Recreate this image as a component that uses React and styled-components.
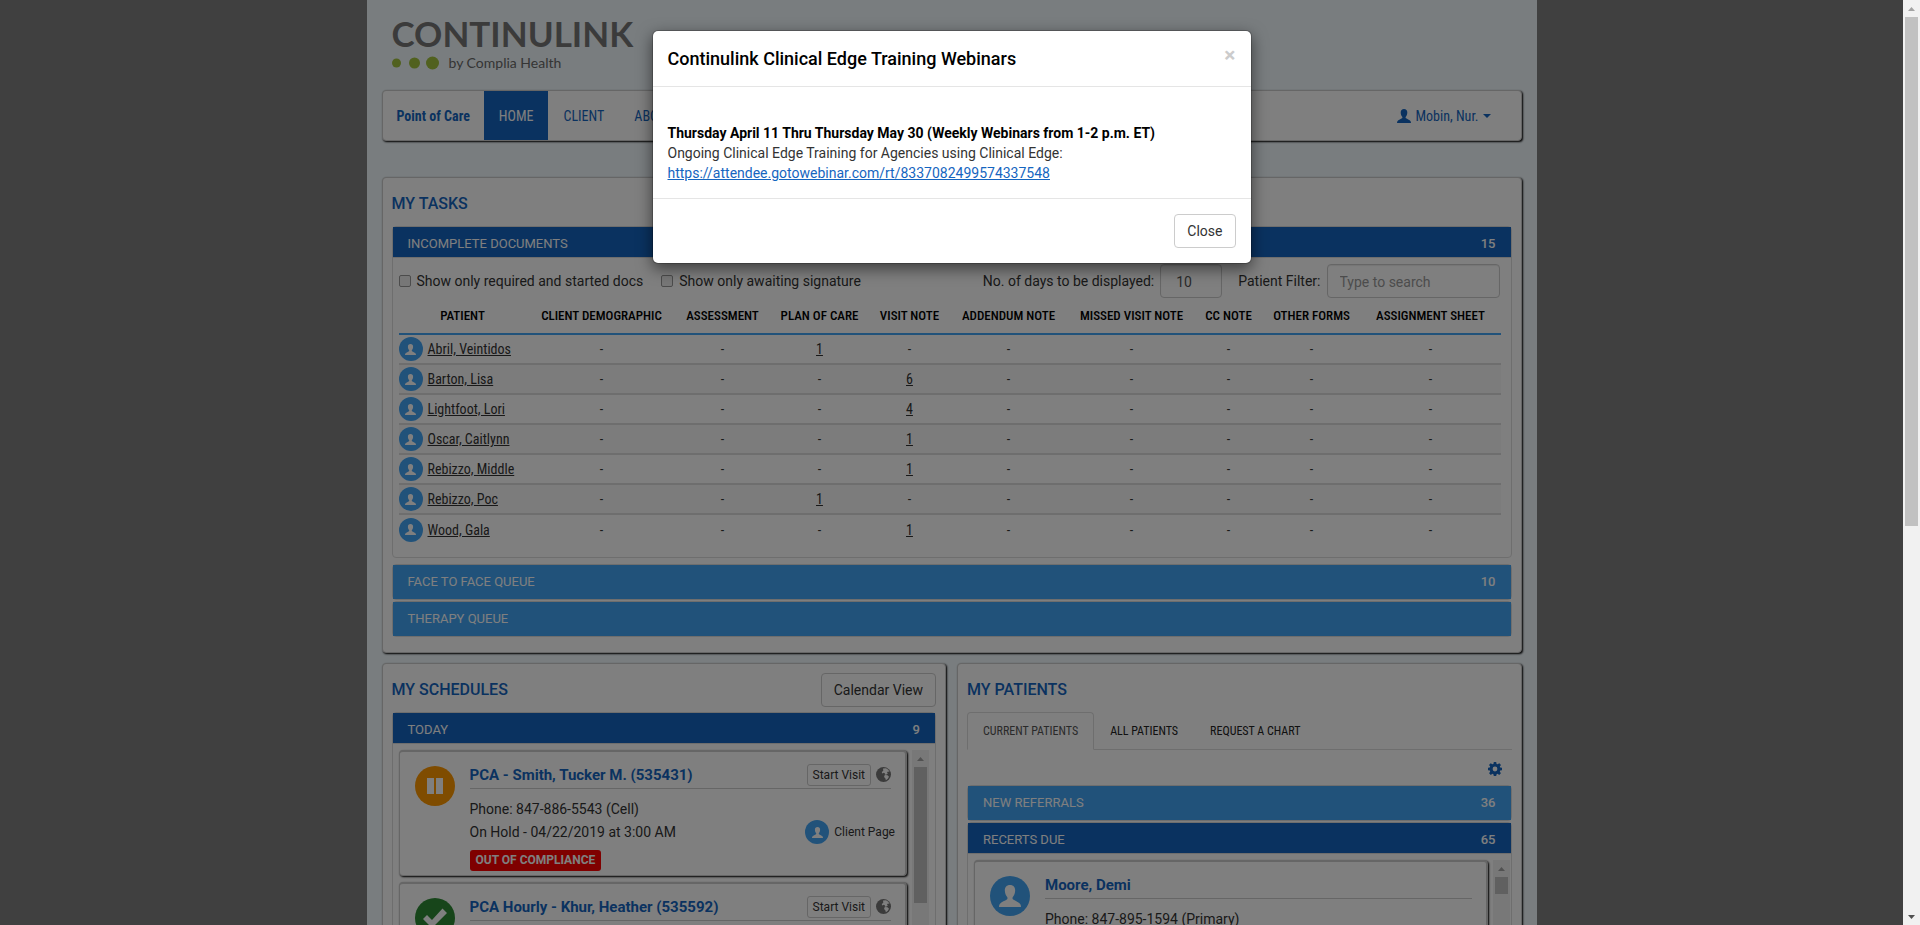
import React from "react";
import styled, { createGlobalStyle, css } from "styled-components";

const BODY = `Roboto, "Liberation Sans", sans-serif`;
const NARROW = `"Roboto Condensed", "Liberation Sans Narrow", Roboto, sans-serif`;
const BLUE = "#1565c0";
const SKY = "#42a5f5";

const Global = createGlobalStyle`
  *, *::before, *::after { box-sizing: border-box; }
  body { margin: 0; font: 14px/20px ${BODY}; color: #333; background: #808080; }
  button, input { font: inherit; color: inherit; }
  h1, h2, h3, p { margin: 0; }
`;

const Shell = styled.div`
  display: flex;
  height: 100vh;
  overflow: hidden;
`;
const Viewport = styled.div`
  position: relative;
  flex: 1;
  min-width: 0;
  overflow: hidden;
`;
const Page = styled.main`
  width: 100%;
  max-width: 1170px;
  min-height: 100%;
  margin: 0 auto;
  padding: 18px 15px 0;
  background: #f3fbff;
`;

const Brand = styled.div`
  height: 72px;
  padding-left: 10px;
`;
const BrandName = styled.div`
  font: 700 35px/30px Lato, sans-serif;
  color: #777;
`;
const BrandLine = styled.div`
  display: flex;
  align-items: center;
  gap: 10px;
  margin-top: 4px;
  font: 14px/22px Lato, sans-serif;
  color: #6a6a6a;
`;

const cardLook = css`
  background: #fff;
  border: 1px solid #ccc;
  border-radius: 4px;
  box-shadow: 1px 1px 2px #000;
`;
const NavBar = styled.nav`
  ${cardLook}
  display: flex;
  height: 51px;
  margin-bottom: 36px;
  font-family: ${NARROW};
`;
const NavLink = styled.a`
  display: flex;
  align-items: center;
  gap: 4px;
  padding: 0 ${(p) => (p.$strong ? 14 : 15)}px;
  text-decoration: none;
  font-weight: ${(p) => (p.$strong ? 700 : 400)};
  color: ${(p) => (p.$active ? "#fff" : BLUE)};
  background: ${(p) => (p.$active ? BLUE : "transparent")};
  margin-left: ${(p) => (p.$end ? "auto" : 0)};
  margin-right: ${(p) => (p.$end ? "15px" : 0)};
`;
const Caret = styled.span`
  border: 4px solid transparent;
  border-top-color: ${BLUE};
  border-bottom: 0;
`;

const Panel = styled.section`
  ${cardLook}
  min-width: 0;
  padding: 9px 9px 14px;
`;
const PanelHead = styled.div`
  display: flex;
  justify-content: space-between;
  align-items: center;
  height: 34px;
  margin-bottom: 5px;
`;
const PanelTitle = styled.h2`
  font: 500 16px/34px ${BODY};
  color: ${BLUE};
`;
const Section = styled.div`
  border: 1px solid #ddd;
  border-radius: 4px;
  margin-bottom: ${(p) => (p.$gap ? 6 : 1)}px;
`;
const Bar = styled.button`
  display: flex;
  justify-content: space-between;
  align-items: center;
  width: 100%;
  height: ${(p) => (p.$open ? 30 : 34)}px;
  padding: ${(p) => (p.$open ? 4 : 0)}px 15px 0;
  border: 0;
  font-size: 13px;
  color: #fff;
  background: ${(p) => (p.$open ? BLUE : SKY)};
`;
const Count = styled.strong`
  font-weight: 500;
`;

const Button = styled.button`
  height: ${(p) => (p.$small ? 22 : 34)}px;
  padding: ${(p) => (p.$small ? "0 5px" : "0 12px")};
  font-size: ${(p) => (p.$small ? 12 : 14)}px;
  background: #fff;
  border: 1px solid #ccc;
  border-radius: ${(p) => (p.$small ? 3 : 4)}px;
`;

const DocsBody = styled.div`
  padding: 6px 11px 13px 6px;
  border-top: 1px solid #ddd;
`;
const Filters = styled.div`
  display: flex;
  align-items: center;
  gap: 16px;
  height: 34px;
`;
const Check = styled.label`
  display: flex;
  align-items: center;
  gap: 6px;
  margin-right: 2px;
`;
const Tick = styled.input`
  appearance: none;
  width: 12px;
  height: 12px;
  margin: 0;
  border: 1px solid #999;
  border-radius: 2px;
  background: #eee;
`;
const Field = styled.label`
  display: flex;
  align-items: center;
  gap: 6px;
  margin-left: ${(p) => (p.$push ? "auto" : 0)};
`;
const TextBox = styled.input`
  width: ${(p) => p.$width}px;
  height: 34px;
  padding: 2px ${(p) => (p.$roomy ? 15 : 12)}px 0;
  color: #555;
  background: #fff;
  border: 1px solid #ccc;
  border-radius: 4px;
  box-shadow: inset 0 1px 1px rgba(0, 0, 0, 0.08);
  &::placeholder { color: #999; }
`;

const Table = styled.table`
  width: 100%;
  table-layout: fixed;
  border-collapse: collapse;
  font-family: ${NARROW};
`;
const Th = styled.th`
  height: 36px;
  padding: 0;
  font-size: 13px;
  line-height: 16px;
  font-weight: 500;
  white-space: nowrap;
  color: #000;
  border-bottom: 2px solid ${SKY};
`;
const Tr = styled.tr`
  height: 30px;
  & + & { border-top: 2px solid #ddd; }
  &:nth-child(even) { background: #f9f9f9; }
`;
const Td = styled.td`
  padding: 0;
  text-align: center;
`;
const Person = styled.div`
  display: flex;
  align-items: center;
  gap: 5px;
`;
const DocLink = styled.a`
  color: #333;
  text-decoration: underline;
`;

const Columns = styled.div`
  display: grid;
  grid-template-columns: 1fr 1fr;
  gap: 11px;
  margin-top: 10px;
`;
const ScrollArea = styled.div`
  display: flex;
  gap: 5px;
  padding: 6px ${(p) => (p.$flush ? 1 : 6)}px 0 6px;
  border-top: 1px solid #ddd;
`;
const List = styled.div`
  flex: 1;
  display: grid;
  align-content: start;
  gap: 6px;
`;
const Visit = styled.article`
  ${cardLook}
  border-width: 2px 2px 1px 1px;
  display: flex;
  gap: 15px;
  min-height: 126px;
  padding: 10px 14px 3px 15px;
`;
const VisitBody = styled.div`
  flex: 1;
`;
const VisitHead = styled.div`
  display: flex;
  align-items: center;
  gap: 5px;
  height: 27px;
  margin-bottom: 9px;
  border-bottom: 1px solid #ccc;
`;
const VisitTitle = styled.h3`
  flex: 1;
  font: 700 15px/24px ${BODY};
  color: ${BLUE};
`;
const VisitRow = styled.div`
  display: flex;
  justify-content: space-between;
`;
const Line = styled.p`
  line-height: 23px;
`;
const Badge = styled.span`
  display: inline-block;
  margin-top: 6px;
  padding: 0 6px;
  font: 700 12px/21px ${BODY};
  color: #fff;
  background: #f00;
  border-radius: 3px;
`;
const ClientLink = styled.a`
  display: flex;
  align-items: center;
  align-self: flex-end;
  gap: 5px;
  margin: 0 -4px 0 0;
  font-size: 12px;
  color: #333;
  text-decoration: none;
`;
const Disc = styled.span`
  display: inline-flex;
  flex: none;
  align-items: center;
  justify-content: center;
  width: ${(p) => p.$size}px;
  height: ${(p) => p.$size}px;
  margin-top: ${(p) => (p.$size > 30 ? 4 : 0)}px;
  border-radius: 50%;
  color: #fff;
  background: ${(p) => p.$color || SKY};
`;

const Tabs = styled.div`
  display: flex;
  height: 38px;
  border-bottom: 1px solid #ddd;
  margin-bottom: 9px;
`;
const Tab = styled.button`
  height: 38px;
  padding: 0 15px;
  border: 1px solid ${(p) => (p.$active ? "#ddd" : "transparent")};
  border-bottom-color: ${(p) => (p.$active ? "#fff" : "transparent")};
  border-radius: 4px 4px 0 0;
  font: 12px/20px ${NARROW};
  color: ${(p) => (p.$active ? "#555" : "#222")};
  background: transparent;
`;
const Tools = styled.div`
  display: flex;
  justify-content: flex-end;
  height: 26px;
  padding: 3px 10px 0;
`;
const IconButton = styled.button`
  display: flex;
  padding: 0;
  border: 0;
  color: ${(p) => p.$color || BLUE};
  background: none;
  height: 16px;
`;

const Track = styled.div`
  width: 17px;
  flex: none;
  display: flex;
  flex-direction: column;
  align-items: center;
  background: #f1f1f1;
`;
const Arrow = styled.span`
  height: 17px;
  display: flex;
  align-items: center;
  color: ${(p) => (p.$down ? "#505050" : "#a3a3a3")};
  margin-top: ${(p) => (p.$down ? "auto" : 0)};
`;
const Thumb = styled.div`
  width: 13px;
  height: ${(p) => p.$length};
  background: #c1c1c1;
`;

const Backdrop = styled.div`
  position: absolute;
  inset: 0;
  padding: 30px 0;
  background: rgba(0, 0, 0, 0.5);
`;
const Dialog = styled.div`
  width: 600px;
  max-width: 100%;
  margin: 0 auto;
  color: #333;
  background: #fff;
  background-clip: padding-box;
  border: 1px solid rgba(0, 0, 0, 0.2);
  border-radius: 6px;
  box-shadow: 0 5px 15px rgba(0, 0, 0, 0.5);
`;
const DialogHead = styled.header`
  display: flex;
  justify-content: space-between;
  padding: 15px 15px 14px;
  border-bottom: 1px solid #e5e5e5;
`;
const DialogTitle = styled.h1`
  font: 500 18px/26px ${BODY};
  color: #000;
`;
const DialogX = styled.button`
  align-self: flex-start;
  padding: 0;
  border: 0;
  background: none;
  font: 700 21px/18px ${BODY};
  color: #ccc;
`;
const DialogBody = styled.div`
  padding: 36px 15px 15px;
`;
const DialogLink = styled.a`
  color: ${BLUE};
  text-decoration: underline;
`;
const Strong = styled.p`
  font-weight: 700;
  color: #000;
`;
const DialogFoot = styled.footer`
  display: flex;
  justify-content: flex-end;
  padding: 15px;
  border-top: 1px solid #e5e5e5;
`;

const UserIcon = ({ size = 14 }) => (
  <svg width={size} height={size} viewBox="0 0 14 14" fill="currentColor" aria-hidden="true">
    <path d="M7 0C4.900 0 3.700 1.400 3.700 3.400c0 1.800.7 3.400 1.500 4.300.3.500.3 1.300-.2 1.600C3.800 10.100 1.800 10.800.8 11.700.2 12.200 0 13 0 14h14c0-1-.2-1.800-.8-2.300-1-.9-3-1.600-4.200-2.400-.5-.3-.5-1.100-.2-1.600.8-.9 1.500-2.500 1.500-4.300C10.300 1.400 9.100 0 7 0z" />
  </svg>
);
const GlobeIcon = () => (
  <svg width="15" height="15" viewBox="0 0 15 15" aria-hidden="true">
    <circle cx="7.5" cy="7.5" r="7.5" fill="currentColor" />
    <path fill="#fff" d="M7 1.500l3-.2 2.300 1.500 1.200 2.200-1.500-.5-1 .8.800 1.200-1.200 1-1.800.3.200-1.300-1.200-.7-1.600.6L5.800 5l1.500-1.300zM8.800 8l2.700.2 1.500 1.600-1.200 2-1.900 1.500-.6-2-1.300-1.300z" />
  </svg>
);
const GearIcon = () => (
  <svg width="14" height="14" viewBox="0 0 14 14" fill="currentColor" fillRule="evenodd" aria-hidden="true">
    <path d="M5.800 0h2.400l.4 1.900 1 .4 1.700-1.100L13 2.900l-1.200 1.600.4 1 1.800.3v2.400l-1.800.4-.4 1 1.100 1.600-1.700 1.700-1.600-1.100-1 .4L8.200 14H5.800l-.4-1.800-1-.4-1.600 1.100-1.700-1.700 1.100-1.600-.4-1L0 8.200V5.800l1.800-.3.400-1L1 2.900l1.700-1.700 1.700 1.100 1-.4zM7 4.600a2.400 2.400 0 100 4.800 2.400 2.400 0 000-4.800z" />
  </svg>
);
const PauseIcon = () => (
  <svg width="18" height="18" viewBox="0 0 18 18" fill="currentColor" aria-hidden="true">
    <path d="M1 1h7v16H1zM10 1h7v16h-7z" />
  </svg>
);
const CheckIcon = () => (
  <svg width="26" height="24" viewBox="0 0 26 24" fill="currentColor" aria-hidden="true">
    <path d="M1 13l4-4 5 5L20.500 2.500 25 7 10 22z" />
  </svg>
);
const Triangle = ({ down }) => (
  <svg width="7" height="4" viewBox="0 0 7 4" fill="currentColor" aria-hidden="true">
    <path d={down ? "M0 0h7L3.500 4z" : "M0 4h7L3.500 0z"} />
  </svg>
);
const Dots = () => (
  <svg width="47" height="14" viewBox="0 0 47 14" fill="#a2c23e" aria-hidden="true">
    <circle cx="4.500" cy="7" r="4.500" />
    <circle cx="22.500" cy="7" r="5.500" />
    <circle cx="40.500" cy="7" r="6.500" />
  </svg>
);

const COLUMNS = [
  ["PATIENT", 128],
  ["CLIENT DEMOGRAPHIC", 150],
  ["ASSESSMENT", 92],
  ["PLAN OF CARE", 102],
  ["VISIT NOTE", 78],
  ["ADDENDUM NOTE", 120],
  ["MISSED VISIT NOTE", 126],
  ["CC NOTE", 68],
  ["OTHER FORMS", 98],
  ["ASSIGNMENT SHEET", 140],
];
const PATIENTS = [
  { name: "Abril, Veintidos", plan: 1 },
  { name: "Barton, Lisa", visit: 6 },
  { name: "Lightfoot, Lori", visit: 4 },
  { name: "Oscar, Caitlynn", visit: 1 },
  { name: "Rebizzo, Middle", visit: 1 },
  { name: "Rebizzo, Poc", plan: 1 },
  { name: "Wood, Gala", visit: 1 },
];

const Scrollbar = ({ length, both }) => (
  <Track aria-hidden="true">
    <Arrow><Triangle /></Arrow>
    <Thumb $length={length} />
    {both && <Arrow $down><Triangle down /></Arrow>}
  </Track>
);

const DocsTable = () => (
  <Table>
    <colgroup>
      {COLUMNS.map(([name, width]) => <col key={name} width={width} />)}
    </colgroup>
    <thead>
      <tr>{COLUMNS.map(([name]) => <Th key={name} scope="col">{name}</Th>)}</tr>
    </thead>
    <tbody>
      {PATIENTS.map((p) => (
        <Tr key={p.name}>
          <Td>
            <Person>
              <Disc $size={24}><UserIcon size={11} /></Disc>
              <DocLink href="#patient">{p.name}</DocLink>
            </Person>
          </Td>
          {["demo", "assess", "plan", "visit", "addendum", "missed", "cc", "other", "sheet"].map((key) => (
            <Td key={key}>{p[key] ? <DocLink href="#docs">{p[key]}</DocLink> : "-"}</Td>
          ))}
        </Tr>
      ))}
    </tbody>
  </Table>
);

const VisitCard = ({ title, color, icon, children }) => (
  <Visit>
    <Disc $size={40} $color={color}>{icon}</Disc>
    <VisitBody>
      <VisitHead>
        <VisitTitle>{title}</VisitTitle>
        <Button $small type="button">Start Visit</Button>
        <IconButton $color="#777" type="button" aria-label="Map"><GlobeIcon /></IconButton>
      </VisitHead>
      {children}
    </VisitBody>
  </Visit>
);

export default function App() {
  return (
    <Shell>
      <Global />
      <Viewport>
        <Page>
          <Brand>
            <BrandName>CONTINULINK</BrandName>
            <BrandLine><Dots />by Complia Health</BrandLine>
          </Brand>
          <NavBar>
            <NavLink href="#poc" $strong>Point of Care</NavLink>
            <NavLink href="#home" $active>HOME</NavLink>
            <NavLink href="#client">CLIENT</NavLink>
            <NavLink href="#about">ABOUT</NavLink>
            <NavLink href="#account" $end><UserIcon />Mobin, Nur.<Caret /></NavLink>
          </NavBar>

          <Panel>
            <PanelHead><PanelTitle>MY TASKS</PanelTitle></PanelHead>
            <Section $gap>
              <Bar $open type="button">INCOMPLETE DOCUMENTS<Count>15</Count></Bar>
              <DocsBody>
                <Filters>
                  <Check><Tick type="checkbox" />Show only required and started docs</Check>
                  <Check><Tick type="checkbox" />Show only awaiting signature</Check>
                  <Field $push>No. of days to be displayed:<TextBox $width={62} $roomy defaultValue="10" /></Field>
                  <Field>Patient Filter:<TextBox $width={173} placeholder="Type to search" /></Field>
                </Filters>
                <DocsTable />
              </DocsBody>
            </Section>
            <Section><Bar type="button">FACE TO FACE QUEUE<Count>10</Count></Bar></Section>
            <Section><Bar type="button">THERAPY QUEUE</Bar></Section>
          </Panel>

          <Columns>
            <Panel>
              <PanelHead>
                <PanelTitle>MY SCHEDULES</PanelTitle>
                <Button type="button">Calendar View</Button>
              </PanelHead>
              <Section>
                <Bar $open type="button">TODAY<Count>9</Count></Bar>
                <ScrollArea>
                  <List>
                    <VisitCard title="PCA - Smith, Tucker M. (535431)" color="#ff9800" icon={<PauseIcon />}>
                      <VisitRow>
                        <div>
                          <Line>Phone: 847-886-5543 (Cell)</Line>
                          <Line>On Hold - 04/22/2019 at 3:00 AM</Line>
                        </div>
                        <ClientLink href="#client">
                          <Disc $size={24}><UserIcon size={11} /></Disc>
                          Client Page
                        </ClientLink>
                      </VisitRow>
                      <Badge>OUT OF COMPLIANCE</Badge>
                    </VisitCard>
                    <VisitCard title="PCA Hourly - Khur, Heather (535592)" color="#2e8b34" icon={<CheckIcon />} />
                  </List>
                  <Scrollbar length="136px" />
                </ScrollArea>
              </Section>
            </Panel>
            <Panel>
              <PanelHead><PanelTitle>MY PATIENTS</PanelTitle></PanelHead>
              <Tabs role="tablist">
                <Tab role="tab" $active>CURRENT PATIENTS</Tab>
                <Tab role="tab">ALL PATIENTS</Tab>
                <Tab role="tab">REQUEST A CHART</Tab>
              </Tabs>
              <Tools><IconButton type="button" aria-label="Settings"><GearIcon /></IconButton></Tools>
              <Section><Bar type="button">NEW REFERRALS<Count>36</Count></Bar></Section>
              <Section>
                <Bar $open type="button">RECERTS DUE<Count>65</Count></Bar>
                <ScrollArea $flush>
                  <List>
                    <Visit>
                      <Disc $size={40}><UserIcon size={22} /></Disc>
                      <VisitBody>
                        <VisitHead><VisitTitle>Moore, Demi</VisitTitle></VisitHead>
                        <Line>Phone: 847-895-1594 (Primary)</Line>
                      </VisitBody>
                    </Visit>
                  </List>
                  <Scrollbar length="17px" />
                </ScrollArea>
              </Section>
            </Panel>
          </Columns>
        </Page>
        <Backdrop>
          <Dialog role="dialog" aria-labelledby="dialog-title">
            <DialogHead>
              <DialogTitle id="dialog-title">Continulink Clinical Edge Training Webinars</DialogTitle>
              <DialogX type="button" aria-label="Dismiss">×</DialogX>
            </DialogHead>
            <DialogBody>
              <Strong>Thursday April 11 Thru Thursday May 30 (Weekly Webinars from 1-2 p.m. ET)</Strong>
              <p>Ongoing Clinical Edge Training for Agencies using Clinical Edge:</p>
              <DialogLink href="#webinar">https://attendee.gotowebinar.com/rt/8337082499574337548</DialogLink>
            </DialogBody>
            <DialogFoot><Button type="button">Close</Button></DialogFoot>
          </Dialog>
        </Backdrop>
      </Viewport>
      <Scrollbar length="55%" both />
    </Shell>
  );
}
